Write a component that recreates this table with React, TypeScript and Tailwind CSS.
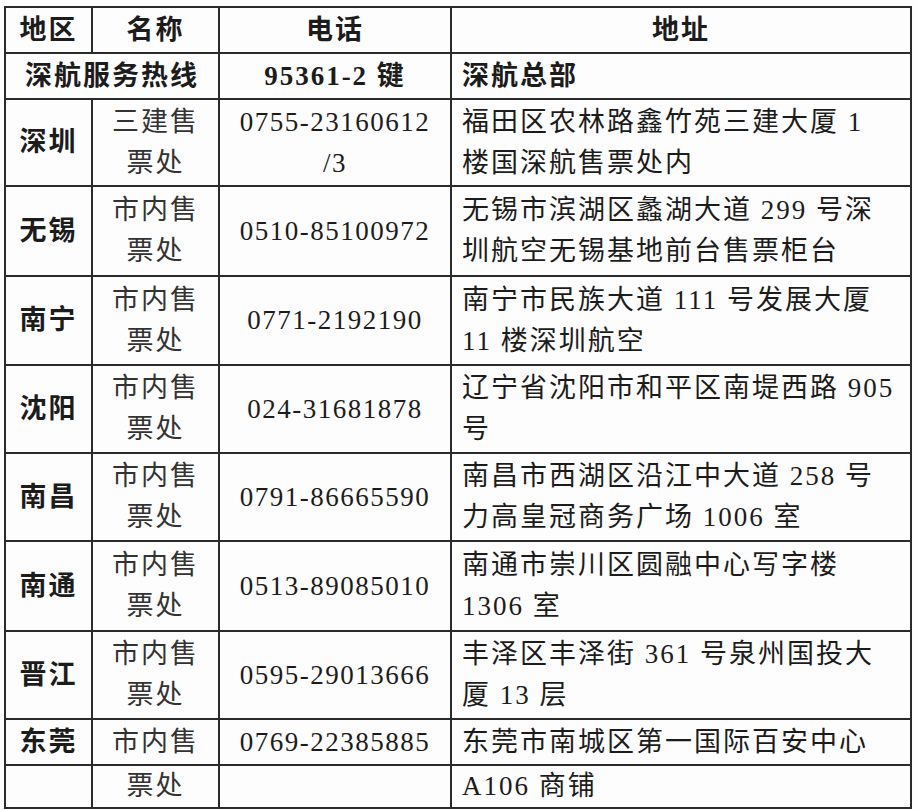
type Row = {
  region: string;
  name: string[];
  phone: string[];
  addr: string[];
  h: string;
};

const rows: Row[] = [
  {
    region: "深圳",
    name: ["三建售", "票处"],
    phone: ["0755-23160612", "/3"],
    addr: ["福田区农林路鑫竹苑三建大厦 1", "楼国深航售票处内"],
    h: "h-[87px]",
  },
  {
    region: "无锡",
    name: ["市内售", "票处"],
    phone: ["0510-85100972"],
    addr: ["无锡市滨湖区蠡湖大道 299 号深", "圳航空无锡基地前台售票柜台"],
    h: "h-[90px]",
  },
  {
    region: "南宁",
    name: ["市内售", "票处"],
    phone: ["0771-2192190"],
    addr: ["南宁市民族大道 111 号发展大厦", "11 楼深圳航空"],
    h: "h-[89px]",
  },
  {
    region: "沈阳",
    name: ["市内售", "票处"],
    phone: ["024-31681878"],
    addr: ["辽宁省沈阳市和平区南堤西路 905", "号"],
    h: "h-[88px]",
  },
  {
    region: "南昌",
    name: ["市内售", "票处"],
    phone: ["0791-86665590"],
    addr: ["南昌市西湖区沿江中大道 258 号", "力高皇冠商务广场 1006 室"],
    h: "h-[88px]",
  },
  {
    region: "南通",
    name: ["市内售", "票处"],
    phone: ["0513-89085010"],
    addr: ["南通市崇川区圆融中心写字楼", "1306 室"],
    h: "h-[90px]",
  },
  {
    region: "晋江",
    name: ["市内售", "票处"],
    phone: ["0595-29013666"],
    addr: ["丰泽区丰泽街 361 号泉州国投大", "厦 13 层"],
    h: "h-[88px]",
  },
  {
    region: "东莞",
    name: ["市内售"],
    phone: ["0769-22385885"],
    addr: ["东莞市南城区第一国际百安中心"],
    h: "h-[46px]",
  },
  {
    region: "",
    name: ["票处"],
    phone: [],
    addr: ["A106 商铺"],
    h: "h-[39px]",
  },
];

const cell = "border-2 border-[#2b2b2b] p-0 align-middle";

const Lines = ({ lines }: { lines: string[] }) => (
  <>
    {lines.map((l, i) => (
      <div key={i} className="leading-[41px] whitespace-nowrap">
        {l}
      </div>
    ))}
  </>
);

export default function App() {
  return (
    <div className="w-[916px] h-[810px] bg-[#fdfdfd] pt-[6px] pl-[4px] text-[#1c1c1c] font-['Liberation_Serif','Noto_Sans_CJK_SC',serif] text-[27px] tracking-[2px]">
      <table className="table-fixed border-collapse w-[906px]">
        <colgroup>
          <col className="w-[87px]" />
          <col className="w-[127px]" />
          <col className="w-[232px]" />
          <col className="w-[460px]" />
        </colgroup>
        <thead>
          <tr className="h-[46px] font-bold">
            <th className={`${cell} text-center`}>地区</th>
            <th className={`${cell} text-center`}>名称</th>
            <th className={`${cell} text-center`}>电话</th>
            <th className={`${cell} text-center`}>地址</th>
          </tr>
        </thead>
        <tbody>
          <tr className="h-[46px] font-bold">
            <td colSpan={2} className={`${cell} text-center`}>
              深航服务热线
            </td>
            <td className={`${cell} text-center`}>95361-2 键</td>
            <td className={`${cell} text-left pl-[10px]`}>深航总部</td>
          </tr>
          {rows.map((r, i) => (
            <tr key={i} className={r.h}>
              <td className={`${cell} text-center font-bold`}>{r.region}</td>
              <td className={`${cell} text-center text-[#333]`}>
                <Lines lines={r.name} />
              </td>
              <td className={`${cell} text-center tracking-[1.5px]`}>
                <Lines lines={r.phone} />
              </td>
              <td className={`${cell} text-left pl-[10px]`}>
                <Lines lines={r.addr} />
              </td>
            </tr>
          ))}
        </tbody>
      </table>
    </div>
  );
}
